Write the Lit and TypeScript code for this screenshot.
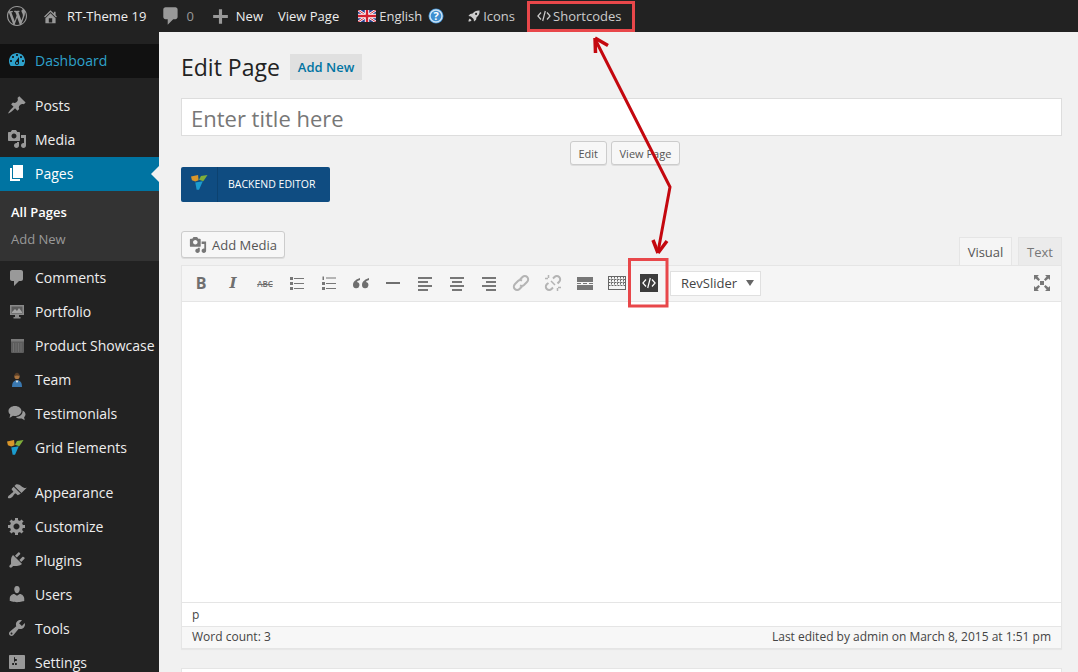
import { LitElement, html, svg, css } from "lit";
import { customElement } from "lit/decorators.js";

const D = {
  wp: "M20 10c0-5.51-4.49-10-10-10C4.48 0 0 4.49 0 10c0 5.52 4.48 10 10 10 5.51 0 10-4.48 10-10zM7.78 15.37L4.37 6.22c.55-.02 1.17-.08 1.17-.08.5-.06.44-1.13-.06-1.11 0 0-1.45.11-2.37.11-.18 0-.37 0-.58-.01C4.12 2.69 6.87 1.11 10 1.11c2.33 0 4.45.87 6.05 2.34-.68-.11-1.65.39-1.65 1.58 0 .74.45 1.36.9 2.1.35.61.55 1.36.55 2.46 0 1.49-1.4 5-1.4 5l-3.03-8.37c.54-.02.82-.17.82-.17.5-.05.44-1.25-.06-1.22 0 0-1.44.12-2.38.12-.87 0-2.33-.12-2.33-.12-.5-.03-.56 1.2-.06 1.22l.92.08 1.26 3.41zM17.41 10c.24-.64.74-1.87.43-4.25.7 1.29 1.05 2.71 1.05 4.25 0 3.29-1.73 6.24-4.4 7.78.97-2.59 1.94-5.2 2.92-7.78zM6.1 18.09C3.12 16.65 1.11 13.53 1.11 10c0-1.3.23-2.48.72-3.59C3.25 10.3 4.67 14.2 6.1 18.09zm4.03-6.63l2.58 6.98c-.86.29-1.76.45-2.71.45-.79 0-1.57-.11-2.29-.33.81-2.38 1.62-4.74 2.42-7.1z",
  home: "M16 8.5l1.53 1.53-1.06 1.06L10 4.62l-6.47 6.47-1.06-1.06L10 2.5l4 4v-2h2v4zm-6-2.46l6 5.99V18H4v-5.97zM12 17v-5H8v5h4z",
  comment: "M5 2h9c1.1 0 2 .9 2 2v7c0 1.1-.9 2-2 2h-2l-5 5v-5H5c-1.1 0-2-.9-2-2V4c0-1.1.9-2 2-2z",
  plus: "M17 8.5v3h-5.5V17h-3v-5.5H3v-3h5.5V3h3v5.5z",
  dashboard: "M3.76 16h12.48c1.1-1.37 1.76-3.11 1.76-5 0-4.42-3.58-8-8-8s-8 3.58-8 8c0 1.89.66 3.63 1.76 5zM10 4c.55 0 1 .45 1 1s-.45 1-1 1-1-.45-1-1 .45-1 1-1zM6 6c.55 0 1 .45 1 1s-.45 1-1 1-1-.45-1-1 .45-1 1-1zm8 0c.55 0 1 .45 1 1s-.45 1-1 1-1-.45-1-1 .45-1 1-1zm-5.37 5.55L12 7v6c0 1.1-.9 2-2 2s-2-.9-2-2c0-.57.24-1.08.63-1.45zM4 10c.55 0 1 .45 1 1s-.45 1-1 1-1-.45-1-1 .45-1 1-1zm12 0c.55 0 1 .45 1 1s-.45 1-1 1-1-.45-1-1 .45-1 1-1zm-5 3c0-.55-.45-1-1-1s-1 .45-1 1 .45 1 1 1 1-.45 1-1z",
  post: "M10.44 3.02l1.82-1.82 6.36 6.35-1.83 1.82c-1.05-.68-2.48-.57-3.41.36l-.75.75c-.92.93-1.04 2.35-.35 3.41l-1.83 1.82-2.41-2.41-2.8 2.79c-.42.42-3.38 2.71-3.8 2.29s1.86-3.39 2.28-3.81l2.79-2.79L4.1 9.36l1.83-1.82c1.05.69 2.48.57 3.4-.36l.75-.75c.93-.92 1.05-2.35.36-3.41z",
  media: "M13 11V4c0-.55-.45-1-1-1h-1.67L9 1H5L3.67 3H2c-.55 0-1 .45-1 1v7c0 .55.45 1 1 1h10c.55 0 1-.45 1-1zM7 4.5c1.38 0 2.5 1.12 2.5 2.5S8.38 9.5 7 9.5 4.5 8.38 4.5 7 5.62 4.5 7 4.5zM14 6h5v10.5c0 1.38-1.12 2.5-2.5 2.5S14 17.88 14 16.5s1.12-2.5 2.5-2.5c.17 0 .34.02.5.05V9h-3V6zm-4 8.05V13h2v3.5c0 1.38-1.12 2.5-2.5 2.5S7 17.88 7 16.5 8.12 14 9.5 14c.17 0 .34.02.5.05z",
  page: "M6 15V2h10v13H6zm-1 1h8v2H3V5h2v11z",
  testimonial: "M8 2c3.6 0 6.5 2.2 6.5 5S11.6 12 8 12c-.7 0-1.3-.1-2-.2L2.5 14l.8-3.4C2 9.700 1.500 8.400 1.500 7 1.500 4.200 4.400 2 8 2zM15.500 6.500c1.800.8 3 2.200 3 3.800 0 1.100-.5 2.100-1.400 2.900l.6 3-3-1.800c-.5.1-1 .2-1.600.2-1.800 0-3.300-.7-4.200-1.700 3.800-.1 6.700-2.600 6.700-5.500 0-.3 0-.6-.1-.9z",
  appearance: "M14.48 11.06L7.41 3.99l1.5-1.5c.5-.56 2.3-.47 3.51.32 1.21.8 1.43 1.28 2.91 2.1 1.18.64 2.45 1.26 4.45.85zm-.71.71L6.7 4.7 4.93 6.47c-.39.39-.39 1.02 0 1.41l1.06 1.06c.39.39.39 1.03 0 1.42-.6.6-1.43 1.11-2.21 1.69-.35.26-.7.53-1.01.84C1.43 13.23.4 15.33 1.08 16s2.77.36 4.11-.97c.32-.31.58-.66.85-1.02.58-.78 1.08-1.61 1.68-2.21.39-.39 1.02-.39 1.41 0l1.06 1.06c.39.39 1.02.39 1.41 0z",
  gear: "M18 12h-2.18c-.17.7-.44 1.35-.81 1.93l1.54 1.54-2.1 2.1-1.54-1.54c-.58.36-1.23.63-1.91.79V19H8v-2.18c-.68-.16-1.33-.43-1.91-.79l-1.54 1.54-2.12-2.12 1.54-1.54c-.36-.58-.63-1.23-.79-1.91H1V9.03h2.17c.16-.7.44-1.35.8-1.94L2.43 5.55l2.1-2.1 1.54 1.54c.58-.37 1.24-.64 1.93-.81V2h3v2.18c.68.16 1.33.43 1.91.79l1.54-1.54 2.12 2.12-1.54 1.54c.36.59.64 1.24.8 1.94H18V12zm-8.5 1.5c1.66 0 3-1.34 3-3s-1.34-3-3-3-3 1.34-3 3 1.34 3 3 3z",
  plugin: "M13.11 4.36L9.87 7.6 8 5.73l3.24-3.24c.35-.34 1.05-.2 1.56.32.52.51.66 1.21.31 1.55zm-8 1.77l.91-1.12 9.01 9.01-1.19.84c-.71.71-2.63 1.16-3.82 1.16H6.14L4.9 17.26c-.59.59-1.54.59-2.12 0-.59-.58-.59-1.53 0-2.12l1.24-1.24v-3.88c0-1.13.4-3.19 1.09-3.89zm7.26 3.97l3.24-3.24c.34-.35 1.04-.21 1.55.31.52.51.66 1.21.31 1.55l-3.24 3.25z",
  users: "M10 9.25c-2.27 0-2.73-3.44-2.73-3.44C7 4.02 7.82 2 9.97 2c2.16 0 2.98 2.02 2.71 3.81 0 0-.41 3.44-2.68 3.44zm0 2.57L12.72 10c2.39 0 4.52 2.33 4.52 4.53v2.49s-3.65 1.13-7.24 1.13c-3.65 0-7.24-1.13-7.24-1.13v-2.49c0-2.25 1.94-4.48 4.47-4.48z",
  tools: "M16.68 9.77c-1.34 1.34-3.3 1.67-4.95.99l-5.41 6.52c-.99.99-2.59.99-3.58 0s-.99-2.59 0-3.57l6.52-5.42c-.68-1.65-.35-3.61.99-4.95 1.28-1.28 3.12-1.62 4.72-1.06l-2.89 2.89 2.82 2.82 2.86-2.87c.53 1.58.18 3.39-1.08 4.65zM3.81 16.21c.4.39 1.04.39 1.43 0 .4-.4.4-1.04 0-1.43-.39-.4-1.03-.4-1.43 0-.39.39-.39 1.03 0 1.43z",
  settings: "M18 16V4c0-.55-.45-1-1-1H3c-.55 0-1 .45-1 1v12c0 .55.45 1 1 1h14c.55 0 1-.45 1-1zM8 11h1c.55 0 1 .45 1 1s-.45 1-1 1H8v1.5c0 .28-.22.5-.5.5s-.5-.22-.5-.5V13H6c-.55 0-1-.45-1-1s.45-1 1-1h1V5.5c0-.28.22-.5.5-.5s.5.22.5.5V7h1c.55 0 1 .45 1 1s-.45 1-1 1h-1v5.5c0 .28-.22.5-.5.5s-.5-.22-.5-.5V9z",
  rocket: "M18 2c-4.500-.2-7.500 1-10 4.500L4.500 7 2 10l3.600.6 3.800 3.800L10 18l3-2.500.5-3.500C17 9.500 18.200 6.500 18 2zM13 5.500a1.500 1.500 0 1 1 0 3 1.500 1.500 0 0 1 0-3zM4 13.500c-1 .7-1.800 2-2 4.500 2.500-.2 3.800-1 4.500-2z",
};

const icon = (d: string, size = 20) =>
  html`<svg class="ic" width=${size} height=${size} viewBox="0 0 20 20"><path d=${d} fill="currentColor" fill-rule="evenodd"></path></svg>`;

const vcLogo = (w: number) => html`<svg width=${w} height=${(w * 16) / 18} viewBox="0 0 18 16">
  <polygon points="0,1.500 7.500,0 8,5.500 4.500,7 1,5.500" fill="#d9962a"></polygon>
  <polygon points="8.500,5 10.500,1 17.500,0 13,6.500" fill="#7fae3a"></polygon>
  <polygon points="4.500,8 12.500,6.500 8.500,15.500 6,15.500" fill="#1b9ccf"></polygon>
</svg>`;

const portfolio = html`<svg width="20" height="20" viewBox="0 0 20 20">
  <rect x="3" y="3" width="14" height="10" fill="#8a8a8a"></rect>
  <rect x="4.500" y="4.500" width="11" height="7" fill="#5c5c5c"></rect>
  <path d="M5 10l3-3 2 2 2-3 3 4v1H5z" fill="#a5a5a5"></path>
  <path d="M8 13h4v2h1.500v1.500h-7V15H8z" fill="#8a8a8a"></path>
</svg>`;

const showcase = html`<svg width="20" height="20" viewBox="0 0 20 20">
  <rect x="4" y="3" width="13" height="14" rx="1" fill="#5d5d5d"></rect>
  <rect x="4" y="3" width="13" height="2.500" fill="#7a7a7a"></rect>
  <path d="M6.500 7v9M9 7v9M11.500 7v9M14 7v9" stroke="#6f6f6f" stroke-width="1"></path>
</svg>`;

const team = html`<svg width="20" height="20" viewBox="0 0 20 20">
  <path d="M5 17c0-4 1.200-6 3.500-6.500h3c2.300.5 3.500 2.500 3.500 6.500z" fill="#3a78b0"></path>
  <path d="M8.500 10.500h3L10 13z" fill="#dfe6ea"></path>
  <circle cx="10" cy="6.500" r="2.600" fill="#a8733f"></circle>
  <path d="M7.400 6c0-2 1.100-3.300 2.600-3.300S12.600 4 12.600 6c-1.300-.8-3.900-.8-5.200 0z" fill="#5a3f28"></path>
</svg>`;

const flag = html`<svg width="18" height="12" viewBox="0 0 18 12">
  <rect width="18" height="12" fill="#2a3f8f"></rect>
  <path d="M0 0L18 12M18 0L0 12" stroke="#fff" stroke-width="2.600"></path>
  <path d="M0 0L18 12M18 0L0 12" stroke="#d3202f" stroke-width="1"></path>
  <path d="M9 0V12M0 6H18" stroke="#fff" stroke-width="4.400"></path>
  <path d="M9 0V12M0 6H18" stroke="#d3202f" stroke-width="2.400"></path>
</svg>`;

const help = html`<svg width="16" height="16" viewBox="0 0 16 16">
  <circle cx="8" cy="8" r="7.500" fill="#3f8fd0"></circle>
  <circle cx="8" cy="8" r="6" fill="none" stroke="#cfe4f5" stroke-width="1.400"></circle>
  <text x="8" y="12" text-anchor="middle" font-family="Open Sans, sans-serif" font-weight="700" font-size="11" fill="#fff">?</text>
</svg>`;

const codeMark = html`<svg width="14" height="12" viewBox="0 0 14 12" fill="none" stroke="currentColor" stroke-width="1.200">
  <path d="M4 2.500L.9 6 4 9.500M10 2.500L13.100 6 10 9.500M8.300 1L5.700 11"></path>
</svg>`;

const lines = (rows: number[][]) => html`<svg width="20" height="20" viewBox="0 0 20 20">
  ${rows.map(([x, y, w, h]) => svg`<rect x=${x} y=${y} width=${w} height=${h} fill="currentColor"></rect>`)}
</svg>`;

const linkIcon = (broken: boolean) => html`<svg width="20" height="20" viewBox="0 0 20 20" fill="none" stroke="#b4b4b4" stroke-width="2">
  ${broken
    ? svg`<path d="M10 5.500L11.500 4a3.300 3.300 0 0 1 4.700 4.700L14.500 10.500"></path>
        <path d="M5.500 10L3.800 11.300a3.300 3.300 0 0 0 4.700 4.700L10 14.500"></path>
        <path d="M5.500 2v3M2 5.500h3M14.500 18v-3M18 14.500h-3M8 8l4 4" stroke-width="1.500"></path>`
    : svg`<path d="M9 6.500l2.500-2.500a3.300 3.300 0 0 1 4.700 4.700L13 12a3.300 3.300 0 0 1-4 .4"></path>
        <path d="M11 13.500L8.500 16a3.300 3.300 0 0 1-4.700-4.700L7 8a3.300 3.300 0 0 1 4-.4"></path>`}
</svg>`;

const keyboard = html`<svg width="20" height="20" viewBox="0 0 20 20" fill="none" stroke="#666">
  <rect x="1.500" y="3.500" width="17" height="13"></rect>
  <path d="M1.500 6.500h17M1.500 9.500h17M1.500 12.500h17M4.500 3.500v9M7.500 3.500v9M10.500 3.500v9M13.500 3.500v9M16.500 3.500v9" stroke-dasharray="2 1"></path>
</svg>`;

const quote = html`<svg width="20" height="20" viewBox="0 0 20 20">
  <path d="M9 5C6 6 2 8 2 12a3.200 3.200 0 1 0 4-3c.3-1 1.500-1.500 3-2zM18 5c-3 1-7 3-7 7a3.200 3.200 0 1 0 4-3c.3-1 1.500-1.500 3-2z" fill="currentColor"></path>
</svg>`;

const fullscreen = html`<svg width="20" height="20" viewBox="0 0 20 20">
  <path d="M2 2h5L5.400 3.600 8 6.500 6.500 8 3.600 5.400 2 7zM18 2v5l-1.600-1.600L13.500 8 12 6.500l2.600-2.900L13 2zM2 18v-5l1.600 1.600L6.500 12 8 13.500l-2.600 2.900L7 18zM18 18h-5l1.600-1.600L12 13.500l1.500-1.500 2.900 2.600L18 13z" fill="currentColor"></path>
  <rect x="8" y="8" width="4" height="4" fill="currentColor"></rect>
</svg>`;

const MENU_A = [
  { label: "Posts", d: D.post },
  { label: "Media", d: D.media },
];
const MENU_B = [
  { label: "Comments", d: D.comment },
  { label: "Portfolio", custom: portfolio },
  { label: "Product Showcase", custom: showcase },
  { label: "Team", custom: team },
  { label: "Testimonials", d: D.testimonial },
  { label: "Grid Elements", custom: vcLogo(17) },
];
const MENU_C = [
  { label: "Appearance", d: D.appearance },
  { label: "Customize", d: D.gear },
  { label: "Plugins", d: D.plugin },
  { label: "Users", d: D.users },
  { label: "Tools", d: D.tools },
  { label: "Settings", d: D.settings },
];

@customElement("app-root")
export class AppRoot extends LitElement {
  static styles = css`
    :host {
      display: block;
      position: relative;
      height: 672px;
      overflow: hidden;
      background: #f1f1f1;
      font-family: "Open Sans", sans-serif;
      color: #444;
    }

    /* Admin bar */
    .bar {
      display: flex;
      align-items: center;
      height: 32px;
      background: #222;
      color: #eee;
      font-size: 13px;
      white-space: nowrap;
    }
    .bar > * {
      display: flex;
      align-items: center;
      flex: none;
    }
    .bar .dim {
      color: #999;
      display: flex;
    }
    .b-logo { margin-left: 7px; color: #999; }
    .b-home { margin-left: 15px; gap: 8px; }
    .b-comments { margin-left: 14px; gap: 4px; }
    .b-new { margin-left: 16px; gap: 5px; }
    .b-view { margin-left: 15px; }
    .b-lang { margin-left: 19px; gap: 3px; color: #ddd; }
    .b-help { margin-left: 6px; }
    .b-icons { margin-left: 23px; gap: 2px; color: #ccc; }
    .b-code { margin-left: 22px; gap: 2px; color: #ccc; }

    .main {
      display: flex;
      height: 640px;
    }

    /* Sidebar */
    .side {
      width: 159px;
      flex: none;
      background: #222;
      padding-top: 12px;
      box-sizing: border-box;
      font-size: 14px;
      color: #eee;
    }
    .row {
      display: flex;
      align-items: center;
      height: 34px;
      box-sizing: border-box;
      white-space: nowrap;
    }
    .row.up {
      padding-bottom: 1px;
    }
    .row .slot {
      width: 35px;
      padding-left: 7px;
      box-sizing: border-box;
      flex: none;
      display: flex;
      align-items: center;
      color: #999;
    }
    .row.dash {
      background: #111;
      color: #2ea2cc;
      padding-bottom: 2px;
    }
    .row.dash .slot {
      color: #2ea2cc;
    }
    .row.current {
      position: relative;
      background: #0074a2;
      color: #fff;
      margin-top: 1px;
      padding-bottom: 2px;
    }
    .row.current .slot {
      color: #fff;
    }
    .row.current::after {
      content: "";
      position: absolute;
      right: 0;
      top: 9px;
      border: 8px solid transparent;
      border-right-color: #f1f1f1;
      border-left: 0;
    }
    .sub {
      background: #333;
      height: 70px;
      box-sizing: border-box;
      padding: 8px 0 0 11px;
      font-size: 13px;
      color: #999;
    }
    .sub div {
      height: 27px;
      line-height: 27px;
    }
    .sub .on {
      color: #fff;
      font-weight: 600;
    }
    .sep {
      height: 10px;
    }

    /* Content */
    .content {
      flex: 1;
      min-width: 0;
      padding: 22px 16px 0 22px;
      display: flex;
      flex-direction: column;
    }
    .content > * {
      flex: none;
    }
    .head {
      display: flex;
      align-items: center;
      gap: 10px;
      height: 26px;
    }
    h1 {
      margin: 0;
      font-size: 23px;
      font-weight: 400;
      color: #222;
    }
    .add-new {
      display: flex;
      align-items: center;
      height: 26px;
      padding: 0 8px;
      background: #e0e0e0;
      color: #0074a2;
      font-size: 13px;
      font-weight: 600;
    }
    .title {
      margin-top: 18px;
      height: 38px;
      box-sizing: border-box;
      display: flex;
      align-items: center;
      padding: 1px 0 0 9px;
      background: #fff;
      border: 1px solid #ddd;
      font-size: 22px;
      color: #777;
    }
    .actions {
      display: flex;
      gap: 4px;
      margin: 5px 0 0 389px;
    }
    .btn {
      display: flex;
      align-items: center;
      justify-content: center;
      box-sizing: border-box;
      background: #f7f7f7;
      border: 1px solid #ccc;
      border-radius: 3px;
      box-shadow: 0 1px 0 #ddd;
      color: #555;
    }
    .actions .btn {
      height: 24px;
      font-size: 11px;
      padding: 0 7.500px;
    }
    .actions .btn:last-child {
      padding: 0 8px;
    }
    .backend {
      display: flex;
      align-items: center;
      box-sizing: border-box;
      margin-top: 2px;
      width: 149px;
      height: 35px;
      background: #0f4c81;
      border-radius: 2px;
      color: #fff;
      font-size: 10.500px;
    }
    .backend .logo {
      display: flex;
      align-items: center;
      justify-content: center;
      box-sizing: border-box;
      width: 37px;
      height: 100%;
      padding-bottom: 4px;
      border-right: 1px solid #0c4270;
      margin-right: 10px;
    }
    .backend .cap {
      padding-bottom: 2px;
    }
    .tabs-row {
      display: flex;
      justify-content: space-between;
      margin-top: 29px;
      height: 34px;
    }
    .media-btn {
      height: 27px;
      padding: 0 7px 0 7px;
      gap: 5px;
      font-size: 13px;
    }
    .media-btn svg {
      color: #777;
    }
    .tabs {
      display: flex;
      align-self: flex-end;
      gap: 6px;
    }
    .tab {
      display: flex;
      align-items: center;
      justify-content: center;
      box-sizing: border-box;
      height: 28px;
      font-size: 13px;
      background: #ebebeb;
      border: 1px solid #e5e5e5;
      border-bottom: 0;
      color: #777;
      width: 44px;
    }
    .tab.on {
      width: 53px;
      height: 29px;
      margin-bottom: -1px;
      background: #f5f5f5;
      color: #555;
    }
    .editor {
      border: 1px solid #e5e5e5;
      background: #fff;
      display: flex;
      flex-direction: column;
      box-shadow: 0 1px 1px rgba(0, 0, 0, 0.04);
    }
    .tools {
      display: flex;
      align-items: center;
      box-sizing: border-box;
      height: 36px;
      padding: 0 0 1px 3px;
      background: #f5f5f5;
      border-bottom: 1px solid #e5e5e5;
      color: #6f6f6f;
    }
    .tb {
      width: 32px;
      height: 34px;
      display: flex;
      align-items: center;
      justify-content: center;
      flex: none;
    }
    .tb.b {
      font-weight: 700;
      font-size: 16px;
    }
    .tb.i {
      font-family: "DejaVu Serif", serif;
      font-style: italic;
      font-weight: 700;
      font-size: 15px;
    }
    .tb.abc {
      font-size: 8px;
      font-weight: 600;
      text-decoration: line-through;
    }
    .tb.soft {
      color: #777;
    }
    .sc {
      display: flex;
      align-items: center;
      justify-content: center;
      width: 18px;
      height: 18px;
      background: #3c3c3c;
      color: #fff;
    }
    .rev {
      display: flex;
      align-items: center;
      justify-content: space-between;
      box-sizing: border-box;
      width: 91px;
      height: 25px;
      margin-left: 5px;
      padding: 0 6px 0 10px;
      background: #fff;
      border: 1px solid #e0e0e0;
      font-size: 13px;
      color: #444;
    }
    .rev i {
      border: 4.500px solid transparent;
      border-top: 6px solid #666;
      border-bottom: 0;
    }
    .fs {
      margin-left: auto;
      margin-right: 3px;
      color: #777;
    }
    .body {
      box-sizing: border-box;
      height: 301px;
      border-bottom: 1px solid #e5e5e5;
    }
    .path {
      height: 23px;
      display: flex;
      align-items: center;
      padding-left: 10px;
      font-size: 12px;
      color: #444;
    }
    .status {
      display: flex;
      justify-content: space-between;
      align-items: center;
      box-sizing: border-box;
      height: 22px;
      padding: 0 10px 2px;
      background: #f7f7f7;
      border-top: 1px solid #e5e5e5;
      font-size: 12px;
      color: #444;
    }
    .next {
      margin-top: 19px;
      height: 60px;
      background: #fff;
      border: 1px solid #e5e5e5;
    }

    /* Callouts drawn over the page */
    .overlay {
      position: absolute;
      left: 0;
      top: 0;
      pointer-events: none;
    }
  `;

  private row(m: { label: string; d?: string; custom?: unknown }, up = false) {
    return html`<div class="row ${up ? "up" : ""}"><span class="slot">${m.d ? icon(m.d) : m.custom}</span>${m.label}</div>`;
  }

  render() {
    return html`
      <div class="bar">
        <span class="b-logo">${icon(D.wp)}</span>
        <span class="b-home"><span class="dim">${icon(D.home, 17)}</span>RT-Theme 19</span>
        <span class="b-comments"><span class="dim">${icon(D.comment, 22)}</span><span class="dim">0</span></span>
        <span class="b-new"><span class="dim">${icon(D.plus, 21)}</span>New</span>
        <span class="b-view">View Page</span>
        <span class="b-lang">${flag}English</span>
        <span class="b-help">${help}</span>
        <span class="b-icons">${icon(D.rocket, 14)}Icons</span>
        <span class="b-code">${codeMark}Shortcodes</span>
      </div>
      <div class="main">
        <nav class="side">
          <div class="row dash"><span class="slot">${icon(D.dashboard)}</span>Dashboard</div>
          <div class="sep"></div>
          ${MENU_A.map((m) => this.row(m))}
          <div class="row current"><span class="slot">${icon(D.page)}</span>Pages</div>
          <div class="sub">
            <div class="on">All Pages</div>
            <div>Add New</div>
          </div>
          ${MENU_B.map((m) => this.row(m, true))}
          <div class="sep"></div>
          ${MENU_C.map((m) => this.row(m))}
        </nav>
        <main class="content">
          <div class="head">
            <h1>Edit Page</h1>
            <span class="add-new">Add New</span>
          </div>
          <div class="title">Enter title here</div>
          <div class="actions">
            <span class="btn">Edit</span>
            <span class="btn">View Page</span>
          </div>
          <div class="backend">
            <span class="logo">${vcLogo(17)}</span><span class="cap">BACKEND EDITOR</span>
          </div>
          <div class="tabs-row">
            <span class="btn media-btn">${icon(D.media, 18)}Add Media</span>
            <div class="tabs">
              <span class="tab on">Visual</span>
              <span class="tab">Text</span>
            </div>
          </div>
          <div class="editor">
            <div class="tools">
              <span class="tb b">B</span>
              <span class="tb i">I</span>
              <span class="tb abc">ABC</span>
              <span class="tb soft">${lines([[3, 4, 3, 3], [3, 9, 3, 3], [3, 14, 3, 3], [7, 5, 10, 1], [7, 10, 10, 1], [7, 15, 10, 1]])}</span>
              <span class="tb soft">${lines([[3.5, 3.5, 1.5, 3.5], [3, 9, 3, 3], [3, 14, 3, 3], [7, 4.5, 10, 1], [7, 10, 10, 1], [7, 15, 10, 1]])}</span>
              <span class="tb">${quote}</span>
              <span class="tb">${lines([[3, 9, 14, 2]])}</span>
              <span class="tb soft">${lines([[3, 4, 14, 2], [3, 8, 10, 2], [3, 12, 14, 2], [3, 16, 10, 2]])}</span>
              <span class="tb soft">${lines([[3, 4, 14, 2], [5, 8, 10, 2], [3, 12, 14, 2], [5, 16, 10, 2]])}</span>
              <span class="tb soft">${lines([[3, 4, 14, 2], [7, 8, 10, 2], [3, 12, 14, 2], [7, 16, 10, 2]])}</span>
              <span class="tb">${linkIcon(false)}</span>
              <span class="tb">${linkIcon(true)}</span>
              <span class="tb soft">${lines([[2, 4, 16, 5], [2, 12, 16, 5], [2, 10, 4, 1], [8, 10, 4, 1], [14, 10, 4, 1]])}</span>
              <span class="tb">${keyboard}</span>
              <span class="tb"><span class="sc">${codeMark}</span></span>
              <div class="rev">RevSlider<i></i></div>
              <span class="tb fs">${fullscreen}</span>
            </div>
            <div class="body"></div>
            <div class="path">p</div>
            <div class="status">
              <span>Word count: 3</span>
              <span>Last edited by admin on March 8, 2015 at 1:51 pm</span>
            </div>
          </div>
          <div class="next"></div>
        </main>
      </div>
      <svg class="overlay" width="1078" height="672" viewBox="0 0 1078 672" fill="none">
        <rect x="528.500" y="2.500" width="105" height="28" stroke="#e8474a" stroke-width="3"></rect>
        <rect x="629.500" y="259.500" width="37.500" height="46.500" stroke="#e8474a" stroke-width="3"></rect>
        <path d="M596 41L670 187L658 252" stroke="#c4080f" stroke-width="3"></path>
        <path d="M595 38L595.500 53M595 38L608 45.500" stroke="#c4080f" stroke-width="3.500"></path>
        <path d="M658 253L653 240M658 253L667 241" stroke="#c4080f" stroke-width="3.500"></path>
      </svg>
    `;
  }
}
